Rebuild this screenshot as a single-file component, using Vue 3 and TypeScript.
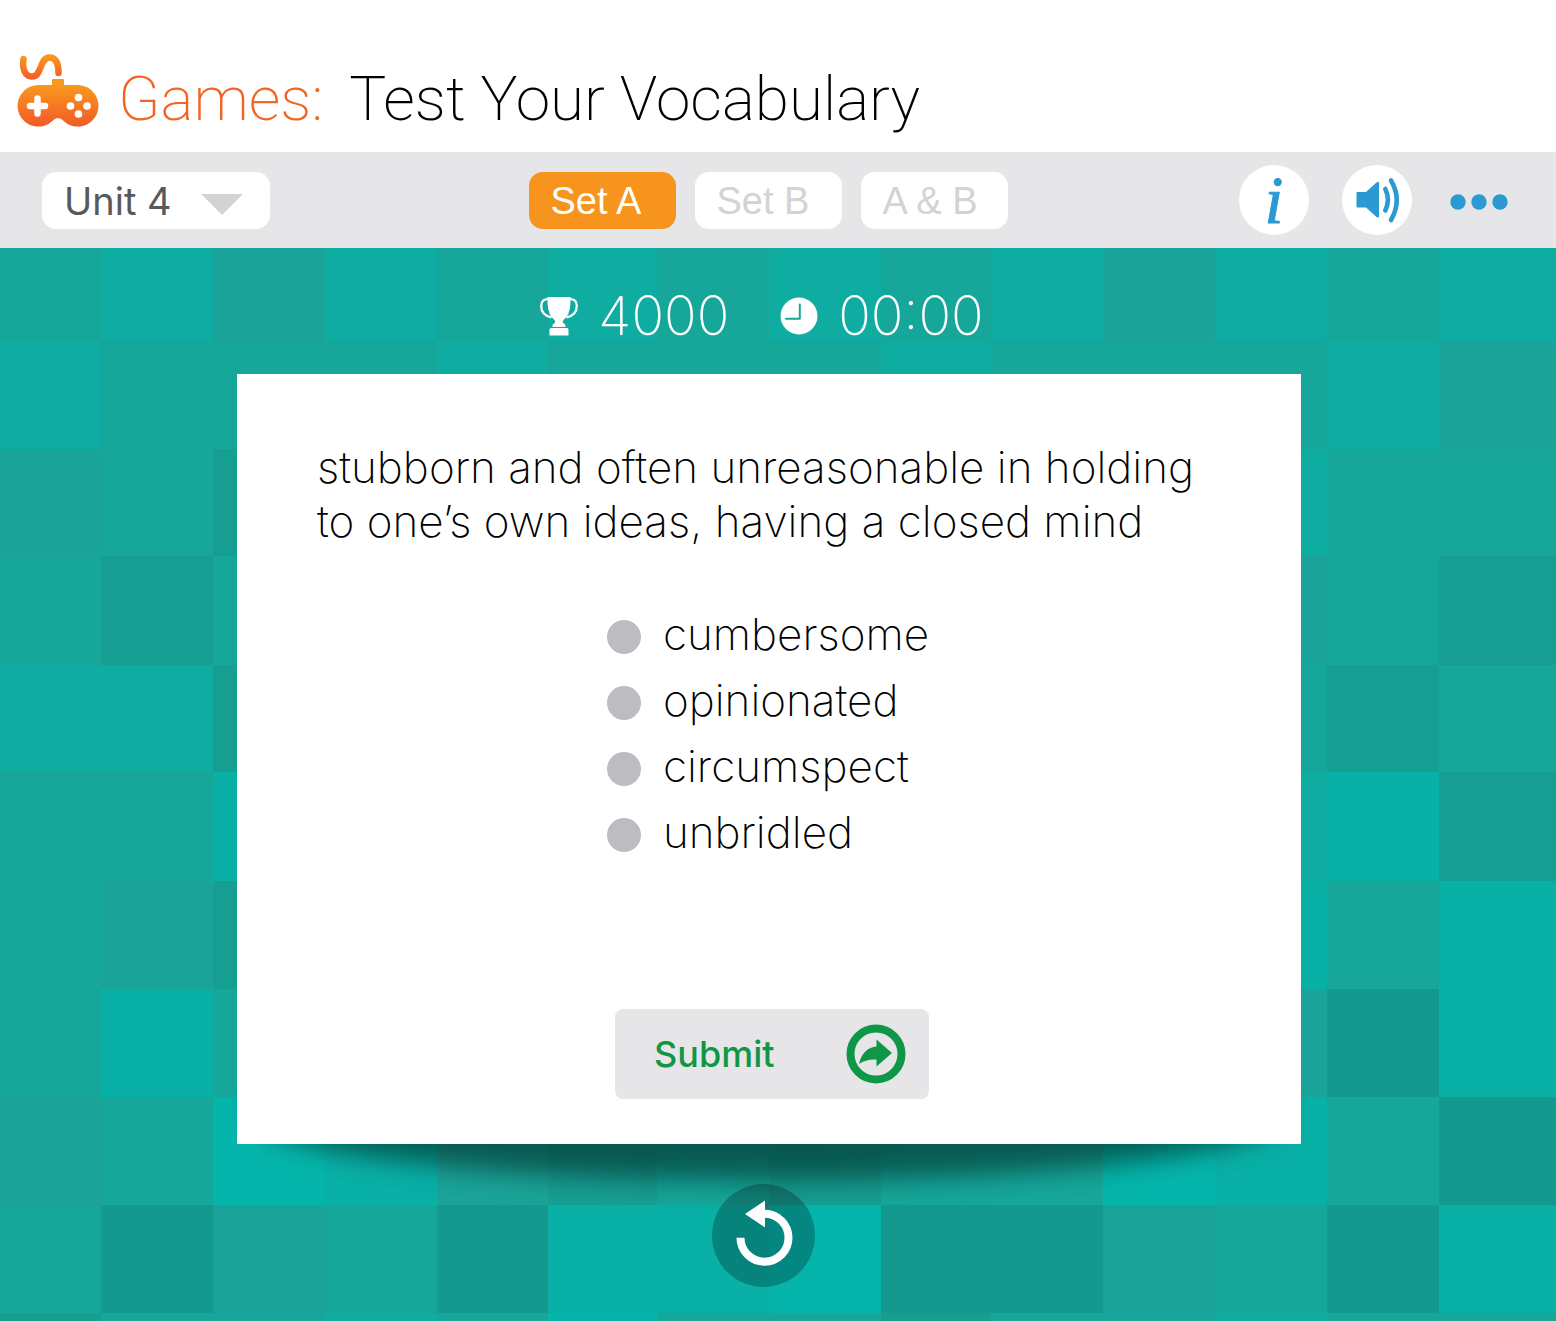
<script setup lang="ts">
import { ref } from 'vue'

type Tone = 'bright' | 'light' | 'base' | 'grey' | 'dark' | 'vivid' | 'deep'

const units = ['Unit 1', 'Unit 2', 'Unit 3', 'Unit 4']
const unit = ref('Unit 4')

const sets = ['Set A', 'Set B', 'A & B']
const activeSet = ref('Set A')

const answers = ['cumbersome', 'opinionated', 'circumspect', 'unbridled']
const answer = ref('')

const tones: Record<string, Tone> = {
  B: 'bright',
  L: 'light',
  M: 'base',
  D: 'grey',
  K: 'dark',
  V: 'vivid',
  X: 'deep',
}
const colEdges = [0, 101, 213, 325, 437, 548, 657, 769, 881, 991, 1103, 1215, 1327, 1439, 1556]
const rowEdges = [0, 93, 201, 308, 417, 524, 633, 741, 849, 957, 1065, 1073]
const mosaic = [
  'MBDBMBMBMBDBMB',
  'BMMMBMMMBMMMBD',
  'DMKMMMMMMMMBMM',
  'MKMMMMMMMMMDMK',
  'BBKMMMMMMMMMKM',
  'MMLMMMMMMMMBLK',
  'MDKMMMMMMMMLML',
  'MLMMMMMMMMMDXL',
  'DMVLDKMKMMVLMX',
  'MXDMXLLVXXDMXL',
  'KMMBMVMMKMMBMM',
]
const tiles = mosaic.flatMap((row, r) =>
  [...row].map((key, c) => ({
    id: `${r}-${c}`,
    tone: tones[key],
    x: colEdges[c],
    y: rowEdges[r],
    width: colEdges[c + 1] - colEdges[c],
    height: rowEdges[r + 1] - rowEdges[r],
  })),
)
</script>

<template>
  <div class="page">
    <header class="header">
      <svg class="logo" viewBox="16 12 84 76" aria-hidden="true">
        <defs>
          <linearGradient id="pad" x1="0" y1="38" x2="0" y2="87" gradientUnits="userSpaceOnUse">
            <stop offset="0.15" stop-color="#f8981d" />
            <stop offset="1" stop-color="#f15a29" />
          </linearGradient>
          <linearGradient id="cord" x1="0" y1="14" x2="0" y2="40" gradientUnits="userSpaceOnUse">
            <stop offset="0.1" stop-color="#f8981d" />
            <stop offset="1" stop-color="#f15a29" />
          </linearGradient>
        </defs>
        <path d="M23.5 19C22 29 25 36.500 32 36.500C42.500 36.500 39 17.500 49.500 17.500C57 17.500 58.500 25 58.500 33" fill="none" stroke="url(#cord)" stroke-width="6.500" stroke-linecap="round" />
        <path d="M53 39H63Q64 39 64 40V45H78A20.800 20.800 0 1 1 63 80.500Q61 78 58 78Q55 78 53 80.500A20.800 20.800 0 1 1 38 45H52V40Q52 39 53 39Z" fill="url(#pad)" />
        <path d="M37.500 58.500V73.500M30 66H45" stroke="#fff" stroke-width="6.500" stroke-linecap="round" />
        <g fill="#fff">
          <circle cx="78.500" cy="57.500" r="3.800" />
          <circle cx="78.500" cy="74" r="3.800" />
          <circle cx="70.500" cy="66" r="3.800" />
          <circle cx="87" cy="66" r="3.800" />
        </g>
      </svg>
      <h1 class="title"><span class="section">Games:</span><span>Test Your Vocabulary</span></h1>
    </header>

    <nav class="toolbar" aria-label="Game options">
      <div class="unit">
        <select v-model="unit" aria-label="Unit">
          <option v-for="u in units" :key="u">{{ u }}</option>
        </select>
        <svg class="caret" viewBox="0 0 42 21" aria-hidden="true"><path d="M0 0H42L21 21Z" fill="#d1d3d4" /></svg>
      </div>
      <div class="sets">
        <button
          v-for="s in sets"
          :key="s"
          type="button"
          class="set"
          :class="{ active: s === activeSet }"
          @click="activeSet = s"
        >{{ s }}</button>
      </div>
      <div class="tools">
        <button type="button" class="round" aria-label="Information"><span class="info">i</span></button>
        <button type="button" class="round" aria-label="Sound">
          <svg viewBox="0 0 70 70" aria-hidden="true">
            <path d="M15.500 27H24L34.500 17.500Q37 16 37 18V51.500Q37 53.500 34.500 52L24 42.500H15.500Q14.500 42.500 14.500 41.500V28Q14.500 27 15.500 27Z" fill="#2b9ad3" />
            <path d="M43.300 24Q48.500 34.500 43.300 45.500M49 15.500Q60.500 35 49 55" fill="none" stroke="#2b9ad3" stroke-width="4.600" stroke-linecap="round" />
          </svg>
        </button>
        <button type="button" class="more" aria-label="More">
          <svg viewBox="0 0 58 16" aria-hidden="true" fill="#2b9ad3">
            <circle cx="8" cy="8" r="7.700" /><circle cx="29" cy="8" r="7.700" /><circle cx="50" cy="8" r="7.700" />
          </svg>
        </button>
      </div>
    </nav>

    <main class="stage">
      <svg class="mosaic" viewBox="0 0 1556 1073" preserveAspectRatio="none" shape-rendering="crispEdges" aria-hidden="true">
        <rect v-for="t in tiles" :key="t.id" :class="t.tone" :x="t.x" :y="t.y" :width="t.width" :height="t.height" />
      </svg>

      <div class="status">
        <div class="stat">
          <svg class="trophy" viewBox="0 0 38 39" aria-hidden="true">
            <path d="M7.500 0H30.500Q31 14 26.500 20Q23 23 22.500 25L25.500 28V30H12.500V28L15.500 25Q15 23 11.500 20Q7 14 7.500 0Z" fill="#fff" />
            <path d="M10.500 31H27.500L28.500 32.500V38.500H9.500V32.500Z" fill="#fff" />
            <path d="M9 2.200Q1.200 1.500 1.200 9Q1.200 18 11.500 20.500M29 2.200Q36.800 1.500 36.800 9Q36.800 18 26.500 20.500" fill="none" stroke="#fff" stroke-width="2.300" />
          </svg>
          <span>4000</span>
        </div>
        <div class="stat">
          <svg class="clock" viewBox="0 0 38 38" aria-hidden="true">
            <circle cx="19" cy="19" r="18.500" fill="#fff" />
            <path d="M19.800 7.500V21.800H6" fill="none" stroke="#13a99d" stroke-width="2" stroke-linecap="round" stroke-linejoin="round" />
          </svg>
          <span>00:00</span>
        </div>
      </div>

      <div class="board">
        <form class="card" @submit.prevent>
          <p id="definition" class="definition">stubborn and often unreasonable in holding to one’s own ideas, having a closed mind</p>
          <div class="answers" role="radiogroup" aria-labelledby="definition">
            <label v-for="a in answers" :key="a" class="answer">
              <input v-model="answer" type="radio" name="answer" :value="a" />
              <span>{{ a }}</span>
            </label>
          </div>
          <button type="submit" class="submit">
            <span>Submit</span>
            <svg viewBox="0 0 60 60" aria-hidden="true">
              <circle cx="30" cy="30" r="25.500" fill="none" stroke="#0f9747" stroke-width="8" />
              <path d="M13 40C16 28 22 23.500 30.500 22.500V15.500L46 29L30.500 42.500V35.500C24 35 18 36.500 13 40Z" fill="#0f9747" />
            </svg>
          </button>
        </form>
      </div>

      <button type="button" class="restart" aria-label="Start over">
        <svg viewBox="0 0 103 103" aria-hidden="true">
          <path d="M28.500 53.700A24 24 0 1 0 52.500 29.700" fill="none" stroke="#fff" stroke-width="8" />
          <path d="M33 30L53 16.500V43.500Z" fill="#fff" />
        </svg>
      </button>
    </main>
  </div>
</template>

<style>
body {
  margin: 0;
  background: #fff;
}
</style>

<style scoped>
.page {
  font-family: Inter, "Liberation Sans", sans-serif;
  color: #000;
}

button,
select {
  margin: 0;
  padding: 0;
  border: 0;
  font: inherit;
  cursor: pointer;
}

svg {
  display: block;
}

.header {
  display: flex;
  align-items: flex-start;
  gap: 18px;
  padding: 52px 16px 15px;
}

.logo {
  flex: none;
  width: 84px;
  height: 76px;
}

.title {
  display: flex;
  flex-wrap: wrap;
  gap: 0 26px;
  margin: 9px 0 0;
  font-family: Roboto, sans-serif;
  font-size: 62px;
  font-weight: 200;
  line-height: 76px;
}

.section {
  color: #f26522;
}

.toolbar {
  display: grid;
  grid-template-columns: 1fr auto 1fr;
  align-items: center;
  height: 96px;
  padding: 0 48px 0 42px;
  background: #e6e6e8;
}

.unit {
  position: relative;
  width: 228px;
}

.unit select {
  display: block;
  width: 100%;
  height: 57px;
  padding: 2px 60px 0 22px;
  border-radius: 14px;
  background: #fff;
  color: #58595b;
  font-size: 38px;
  font-weight: 400;
  appearance: none;
}

.caret {
  position: absolute;
  top: 22px;
  right: 27px;
  width: 42px;
  height: 21px;
  pointer-events: none;
}

.sets {
  display: flex;
  gap: 19px;
  margin-right: 14px;
}

.set {
  width: 147px;
  height: 57px;
  padding: 2px 0 0 22px;
  border-radius: 14px;
  background: #fff;
  color: #d1d3d4;
  font-family: "Liberation Sans", Arial, sans-serif;
  font-size: 38px;
  text-align: left;
}

.set.active {
  background: #f7941e;
  color: #fff;
}

.tools {
  display: flex;
  align-items: center;
  justify-content: flex-end;
  gap: 33px;
}

.round {
  width: 70px;
  height: 70px;
  border-radius: 50%;
  background: #fff;
}

.info {
  display: block;
  color: #2b9ad3;
  font-family: "Liberation Serif", serif;
  font-size: 68px;
  font-style: italic;
  line-height: 64px;
  -webkit-text-stroke: 1px #2b9ad3;
}

.more {
  width: 58px;
  margin: 4px 0 0 5px;
  background: none;
}

.stage {
  position: relative;
  isolation: isolate;
  display: flex;
  flex-direction: column;
  align-items: center;
  padding: 38px 18px 34px 0;
}

.mosaic {
  position: absolute;
  inset: 0;
  z-index: -1;
  width: 100%;
  height: 100%;
}

.bright { fill: #0fada1; }
.light { fill: #09b0a6; }
.base { fill: #16a69a; }
.grey { fill: #1aa398; }
.dark { fill: #179e93; }
.vivid { fill: #05b5ab; }
.deep { fill: #14998f; }

.status {
  display: flex;
  gap: 51px;
  margin-right: 14px;
  color: #fff;
  font-size: 54px;
  font-weight: 200;
  line-height: 60px;
}

.stat {
  display: flex;
  align-items: center;
  gap: 20px;
}

.trophy {
  width: 38px;
  height: 39px;
}

.clock {
  width: 38px;
  height: 38px;
}

.board {
  position: relative;
  width: 100%;
  max-width: 1064px;
  margin-top: 28px;
}

.board::before {
  content: "";
  position: absolute;
  right: 16px;
  bottom: -36px;
  left: 16px;
  height: 130px;
  border-radius: 50%;
  background: rgba(0, 48, 42, 0.64);
  filter: blur(13px);
}

.card {
  position: relative;
  box-sizing: border-box;
  display: flex;
  flex-direction: column;
  align-items: center;
  padding: 66px 80px 45px;
  background: #fff;
}

.definition {
  align-self: stretch;
  margin: 0;
  font-size: 44px;
  font-weight: 200;
  line-height: 54px;
}

.answers {
  display: flex;
  flex-direction: column;
  margin: 53px 2px 0 0;
}

.answer {
  display: flex;
  align-items: center;
  gap: 22px;
  font-size: 44px;
  font-weight: 200;
  line-height: 66px;
  cursor: pointer;
}

.answer input {
  flex: none;
  width: 34px;
  height: 34px;
  margin: 6px 0 0;
  border-radius: 50%;
  background: #bbbdc0;
  appearance: none;
}

.answer input:checked {
  background: #0f9747;
}

.submit {
  display: flex;
  align-items: center;
  justify-content: space-between;
  width: 314px;
  height: 90px;
  margin: 144px 0 0 6px;
  padding: 0 23px 0 39px;
  border-radius: 8px;
  background: #e6e6e8;
  color: #0f9747;
  font-size: 36px;
  font-weight: 500;
}

.submit svg {
  width: 60px;
  height: 60px;
}

.restart {
  position: relative;
  width: 103px;
  height: 103px;
  margin: 40px 11px 0 0;
  border-radius: 50%;
  background: rgba(0, 0, 0, 0.25);
}
</style>
